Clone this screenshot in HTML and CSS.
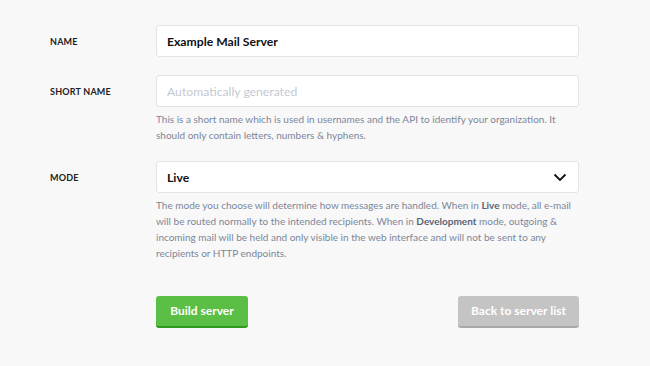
FILE: index.html
```html
<!DOCTYPE html>
<html lang="en">
    <head>
        <meta charset="UTF-8">
        <title>New mail server</title>
        <link rel="stylesheet" href="styles.css">
    </head>

    <body class="page">
        <form class="server-form">
            <div class="server-form__row">
                <label class="server-form__label">Name</label>
                <div class="server-form__field">
                    <input class="server-form__input" type="text" value="Example Mail Server">
                </div>
            </div>

            <div class="server-form__row">
                <label class="server-form__label">Short name</label>
                <div class="server-form__field">
                    <input class="server-form__input" type="text" placeholder="Automatically generated">
                    <p class="server-form__help">This is a short name which is used in usernames and the API to identify your organization. It should only contain letters, numbers &amp; hyphens.</p>
                </div>
            </div>

            <div class="server-form__row">
                <label class="server-form__label">Mode</label>
                <div class="server-form__field">
                    <div class="server-form__select">
                        <span class="server-form__select__value">Live</span>
                        <svg class="server-form__select__arrow" width="14" height="9" viewBox="0 0 14 9">
                            <path d="M1.5 1.5 L7 7 L12.5 1.5" fill="none" stroke="#111" stroke-width="1.8"/>
                        </svg>
                    </div>
                    <p class="server-form__help">The mode you choose will determine how messages are handled. When in <strong class="server-form__help__term">Live</strong> mode, all e-mail will be routed normally to the intended recipients. When in <strong class="server-form__help__term">Development</strong> mode, outgoing &amp; incoming mail will be held and only visible in the web interface and will not be sent to any recipients or HTTP endpoints.</p>
                </div>
            </div>

            <div class="server-form__actions">
                <button class="server-form__button server-form__button--primary" type="button">Build server</button>
                <button class="server-form__button server-form__button--secondary" type="button">Back to server list</button>
            </div>
        </form>
    </body>
</html>
```

FILE: styles.css
```css
html,
body {
    border: none;
    height: 100%;
    margin: 0;
    padding: 0;
    width: 100%;
}

:root {
    --color-page: #f8f8f8;
    --color-border: #e2e4ea;
    --color-label: #1d1d1d;
    --color-text: #111111;
    --color-help: #7c8698;
    --color-placeholder: #c3c9d4;
    --color-green: #5bbf45;
    --color-green-dark: #2f9a1d;
    --color-grey: #c4c4c4;
    --color-grey-dark: #a9a9a9;
}

.page {
    background-color: var(--color-page);
    font-family: "Lato", "Noto Sans", sans-serif;
}

.server-form {
    padding: 25px 0 0 50px;
    width: 529px;
}

.server-form__row {
    display: grid;
    grid-template-columns: 106px 423px;
    margin-bottom: 18px;
}

.server-form__label {
    color: var(--color-label);
    font-size: 9px;
    font-weight: 700;
    height: 32px;
    line-height: 34px;
    letter-spacing: 0.2px;
    text-transform: uppercase;
}

.server-form__field {
    display: flex;
    flex-direction: column;
}

.server-form__input,
.server-form__select {
    background: #ffffff;
    border: 1px solid var(--color-border);
    border-radius: 3px;
    box-sizing: border-box;
    color: var(--color-text);
    font-family: inherit;
    font-size: 12.2px;
    font-weight: 700;
    height: 32px;
    padding: 0 10px;
    width: 100%;
}

.server-form__input::placeholder {
    color: var(--color-placeholder);
    font-weight: 400;
}

.server-form__select {
    align-items: center;
    display: flex;
    justify-content: space-between;
    padding-right: 11px;
}

.server-form__help {
    color: var(--color-help);
    font-size: 10px;
    line-height: 16.3px;
    margin: 3.5px 0 0 0;
}

.server-form__help__term {
    color: #5a6475;
}

.server-form__actions {
    display: flex;
    justify-content: space-between;
    margin-left: 106px;
    padding-top: 16px;
}

.server-form__button {
    border: none;
    border-radius: 3px;
    color: #ffffff;
    font-family: inherit;
    font-size: 12px;
    font-weight: 700;
    height: 32px;
    padding: 0;
    white-space: nowrap;
}

.server-form__button--primary {
    background-color: var(--color-green);
    border-bottom: 2px solid var(--color-green-dark);
    width: 92px;
}

.server-form__button--secondary {
    background-color: var(--color-grey);
    border-bottom: 2px solid var(--color-grey-dark);
    width: 121px;
}
```
